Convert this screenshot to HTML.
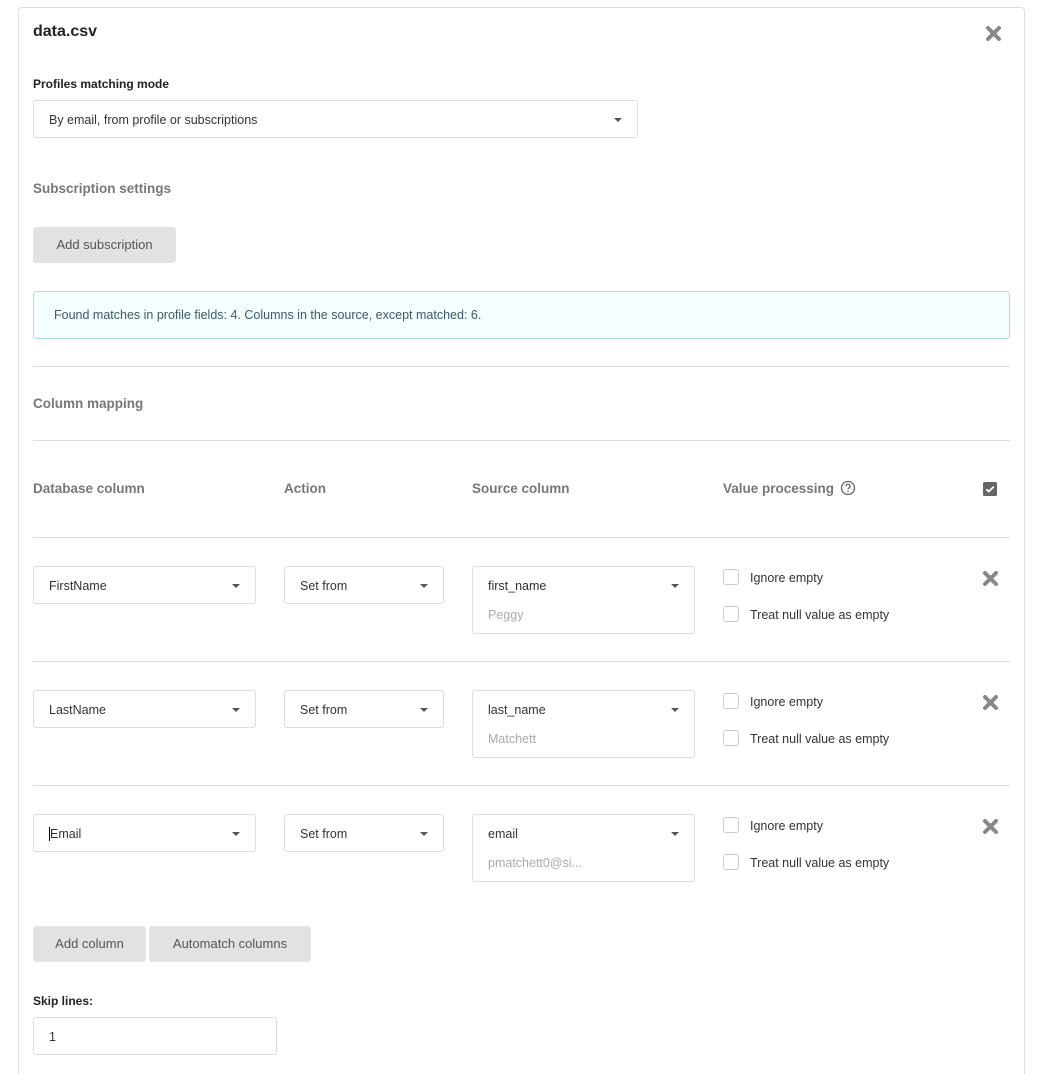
<!DOCTYPE html>
<html style="width:1042px;height:1074px;overflow:hidden"><head><meta charset="utf-8"><style>
*{box-sizing:border-box;margin:0;padding:0}
body{width:1042px;height:1074px;background:#fff;font-family:"Liberation Sans",sans-serif;font-size:12.5px;color:#333;position:relative;overflow:hidden}
.card{position:absolute;left:18px;top:7px;width:1007px;height:1080px;border:1px solid #ddd;border-radius:4px}
.a{position:absolute}
.sel{position:absolute;border:1px solid #ddd;border-radius:3px;background:#fff}
.sel .t{position:absolute;left:15px;top:12px;color:#333}
.sel .ph{position:absolute;left:15px;top:41px;color:#aaa}
.sel .car{position:absolute;right:15px;top:17px;width:0;height:0;border-left:4px solid transparent;border-right:4px solid transparent;border-top:4px solid #555}
.hr{position:absolute;left:33px;width:977px;height:1px;background:#ddd}
.h{position:absolute;color:#777;font-weight:bold;font-size:13.5px}
.btn{position:absolute;background:#e1e2e4;border-radius:3px;color:#555;font-size:13px;text-align:center;line-height:36px}
.cb{position:absolute;width:16px;height:16px;border:1px solid #ccc;border-radius:3px;background:#fff}
.lbl{position:absolute;color:#333}
</style></head><body>
<div class="card"></div>
<div class="a" style="left:33px;top:23px;font-size:16px;font-weight:bold;color:#222">data.csv</div>
<svg class="a" style="left:985px;top:25px" width="17" height="17" viewBox="0 0 17 17"><path d="M3 3L14 14M14 3L3 14" stroke="#888" stroke-width="4" stroke-linecap="round"/></svg>
<div class="a" style="left:33px;top:77px;font-size:12px;font-weight:bold;color:#222">Profiles matching mode</div>
<div class="sel" style="left:33px;top:100px;width:605px;height:38px"><span class="t">By email, from profile or subscriptions</span><span class="car"></span></div>
<div class="h" style="left:33px;top:181px">Subscription settings</div>
<div class="btn" style="left:33px;top:227px;width:143px;height:36px">Add subscription</div>
<div class="a" style="left:33px;top:291px;width:977px;height:48px;background:#f5fefe;border:1px solid #a9dde2;border-radius:3px;color:#3d5a6a;padding:16px 0 0 20px">Found matches in profile fields: 4. Columns in the source, except matched: 6.</div>
<div class="hr" style="top:366px"></div>
<div class="h" style="left:33px;top:396px">Column mapping</div>
<div class="hr" style="top:440px"></div>
<div class="h" style="left:33px;top:481px">Database column</div>
<div class="h" style="left:284px;top:481px">Action</div>
<div class="h" style="left:472px;top:481px">Source column</div>
<div class="h" style="left:723px;top:481px">Value processing</div>
<svg class="a" style="left:840px;top:480px" width="16" height="16" viewBox="0 0 16 16"><circle cx="8" cy="8" r="6.5" fill="none" stroke="#666" stroke-width="1.3"/><path d="M6 6.3a2 2 0 1 1 2.8 1.8c-.6.3-.8.6-.8 1.3" fill="none" stroke="#666" stroke-width="1.3"/><circle cx="8" cy="11.3" r=".8" fill="#666"/></svg>
<svg class="a" style="left:983px;top:482px" width="14" height="14" viewBox="0 0 14 14"><rect width="14" height="14" rx="1.5" fill="#666"/><path d="M3.3 7.2l2.4 2.4 5-5" fill="none" stroke="#fff" stroke-width="1.8"/></svg>
<div class="hr" style="top:537px"></div>

<div class="sel" style="left:33px;top:566px;width:223px;height:38px"><span class="t">FirstName</span><span class="car"></span></div>
<div class="sel" style="left:284px;top:566px;width:160px;height:38px"><span class="t">Set from</span><span class="car"></span></div>
<div class="sel" style="left:472px;top:566px;width:223px;height:68px"><span class="t">first_name</span><span class="ph">Peggy</span><span class="car"></span></div>
<div class="cb" style="left:723px;top:569px"></div><div class="lbl" style="left:750px;top:571px">Ignore empty</div>
<div class="cb" style="left:723px;top:606px"></div><div class="lbl" style="left:750px;top:608px">Treat null value as empty</div>
<svg class="a" style="left:982px;top:570px" width="17" height="17" viewBox="0 0 17 17"><path d="M3 3L14 14M14 3L3 14" stroke="#888" stroke-width="4" stroke-linecap="round"/></svg>
<div class="hr" style="top:661px"></div>

<div class="sel" style="left:33px;top:690px;width:223px;height:38px"><span class="t">LastName</span><span class="car"></span></div>
<div class="sel" style="left:284px;top:690px;width:160px;height:38px"><span class="t">Set from</span><span class="car"></span></div>
<div class="sel" style="left:472px;top:690px;width:223px;height:68px"><span class="t">last_name</span><span class="ph">Matchett</span><span class="car"></span></div>
<div class="cb" style="left:723px;top:693px"></div><div class="lbl" style="left:750px;top:695px">Ignore empty</div>
<div class="cb" style="left:723px;top:730px"></div><div class="lbl" style="left:750px;top:732px">Treat null value as empty</div>
<svg class="a" style="left:982px;top:694px" width="17" height="17" viewBox="0 0 17 17"><path d="M3 3L14 14M14 3L3 14" stroke="#888" stroke-width="4" stroke-linecap="round"/></svg>
<div class="hr" style="top:785px"></div>

<div class="sel" style="left:33px;top:814px;width:223px;height:38px"><span class="t" style="border-left:1px solid #000">Email</span><span class="car"></span></div>
<div class="sel" style="left:284px;top:814px;width:160px;height:38px"><span class="t">Set from</span><span class="car"></span></div>
<div class="sel" style="left:472px;top:814px;width:223px;height:68px"><span class="t">email</span><span class="ph">pmatchett0@si...</span><span class="car"></span></div>
<div class="cb" style="left:723px;top:817px"></div><div class="lbl" style="left:750px;top:819px">Ignore empty</div>
<div class="cb" style="left:723px;top:854px"></div><div class="lbl" style="left:750px;top:856px">Treat null value as empty</div>
<svg class="a" style="left:982px;top:818px" width="17" height="17" viewBox="0 0 17 17"><path d="M3 3L14 14M14 3L3 14" stroke="#888" stroke-width="4" stroke-linecap="round"/></svg>

<div class="btn" style="left:33px;top:926px;width:113px;height:36px">Add column</div>
<div class="btn" style="left:149px;top:926px;width:162px;height:36px">Automatch columns</div>
<div class="a" style="left:33px;top:994px;font-size:12px;font-weight:bold;color:#222">Skip lines:</div>
<div class="sel" style="left:33px;top:1017px;width:244px;height:38px"><span class="t">1</span></div>
</body></html>
